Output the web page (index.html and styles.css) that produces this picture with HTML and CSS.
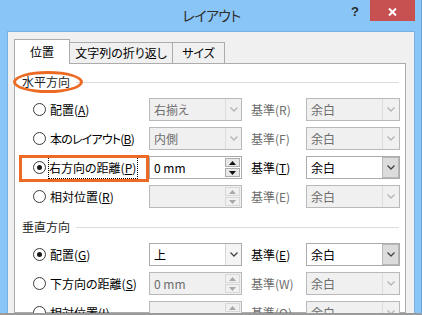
FILE: index.html
```html
<!DOCTYPE html>
<html lang="ja">
<head>
<meta charset="utf-8">
<link rel="stylesheet" href="styles.css">
</head>
<body>
<div class="window">
  <div class="titlebar">
    <div></div>
    <div class="title">レイアウト</div>
    <div class="controls">
      <span class="help">?</span>
      <span class="close"><svg width="9" height="8" viewBox="0 0 9 8"><path d="M1 0.5 L8 7.5 M8 0.5 L1 7.5" stroke="#fff" stroke-width="2" fill="none"/></svg></span>
    </div>
  </div>
  <div class="client">
    <div class="tabs">
      <div class="tab sel">位置</div>
      <div class="tab t2">文字列の折り返し</div>
      <div class="tab t3">サイズ</div>
    </div>
    <div class="panel">
      <div class="heading"><span class="htext">水平方向</span><span class="ellipse"></span></div>
      <div class="rows">
        <div class="row">
          <div class="opt"><span class="radio"></span><span>配置(<u>A</u>)</span></div>
          <div class="combo dis"><span class="val">右揃え</span><span class="btn"><svg width="8" height="5" viewBox="0 0 8 5"><path d="M0.5 0.5 L4 4 L7.5 0.5" fill="none" stroke="currentColor" stroke-width="1.3"/></svg></span></div>
          <div class="lbl dis">基準(R)</div>
          <div class="combo dis wide"><span class="val">余白</span><span class="btn"><svg width="8" height="5" viewBox="0 0 8 5"><path d="M0.5 0.5 L4 4 L7.5 0.5" fill="none" stroke="currentColor" stroke-width="1.3"/></svg></span></div>
        </div>
        <div class="row">
          <div class="opt"><span class="radio"></span><span class="narrow">本のレイアウト(<u>B</u>)</span></div>
          <div class="combo dis"><span class="val">内側</span><span class="btn"><svg width="8" height="5" viewBox="0 0 8 5"><path d="M0.5 0.5 L4 4 L7.5 0.5" fill="none" stroke="currentColor" stroke-width="1.3"/></svg></span></div>
          <div class="lbl dis">基準(F)</div>
          <div class="combo dis wide"><span class="val">余白</span><span class="btn"><svg width="8" height="5" viewBox="0 0 8 5"><path d="M0.5 0.5 L4 4 L7.5 0.5" fill="none" stroke="currentColor" stroke-width="1.3"/></svg></span></div>
        </div>
        <div class="row">
          <div class="opt focus-row"><span class="radio on"></span><span class="focus">右方向の距離(<u>P</u>)</span><span class="box"></span></div>
          <div class="spin"><span class="val">0 mm</span><span class="sbtns"><span class="sb"><svg width="7" height="4" viewBox="0 0 7 4"><path d="M0 4 L3.5 0 L7 4Z" fill="currentColor"/></svg></span><span class="sb"><svg width="7" height="4" viewBox="0 0 7 4"><path d="M0 0 L3.5 4 L7 0Z" fill="currentColor"/></svg></span></span></div>
          <div class="lbl">基準(<u>T</u>)</div>
          <div class="combo wide"><span class="val">余白</span><span class="btn"><svg width="8" height="5" viewBox="0 0 8 5"><path d="M0.5 0.5 L4 4 L7.5 0.5" fill="none" stroke="currentColor" stroke-width="1.3"/></svg></span></div>
        </div>
        <div class="row">
          <div class="opt"><span class="radio"></span><span>相対位置(<u>R</u>)</span></div>
          <div class="spin dis"><span class="val"></span><span class="sbtns"><span class="sb"><svg width="7" height="4" viewBox="0 0 7 4"><path d="M0 4 L3.5 0 L7 4Z" fill="currentColor"/></svg></span><span class="sb"><svg width="7" height="4" viewBox="0 0 7 4"><path d="M0 0 L3.5 4 L7 0Z" fill="currentColor"/></svg></span></span></div>
          <div class="lbl dis">基準(E)</div>
          <div class="combo dis wide"><span class="val">余白</span><span class="btn"><svg width="8" height="5" viewBox="0 0 8 5"><path d="M0.5 0.5 L4 4 L7.5 0.5" fill="none" stroke="currentColor" stroke-width="1.3"/></svg></span></div>
        </div>
      </div>
      <div class="heading second"><span class="htext">垂直方向</span></div>
      <div class="rows">
        <div class="row">
          <div class="opt"><span class="radio on"></span><span>配置(<u>G</u>)</span></div>
          <div class="combo"><span class="val">上</span><span class="btn"><svg width="8" height="5" viewBox="0 0 8 5"><path d="M0.5 0.5 L4 4 L7.5 0.5" fill="none" stroke="currentColor" stroke-width="1.3"/></svg></span></div>
          <div class="lbl">基準(<u>E</u>)</div>
          <div class="combo wide"><span class="val">余白</span><span class="btn"><svg width="8" height="5" viewBox="0 0 8 5"><path d="M0.5 0.5 L4 4 L7.5 0.5" fill="none" stroke="currentColor" stroke-width="1.3"/></svg></span></div>
        </div>
        <div class="row">
          <div class="opt"><span class="radio"></span><span>下方向の距離(<u>S</u>)</span></div>
          <div class="spin dis"><span class="val">0 mm</span><span class="sbtns"><span class="sb"><svg width="7" height="4" viewBox="0 0 7 4"><path d="M0 4 L3.5 0 L7 4Z" fill="currentColor"/></svg></span><span class="sb"><svg width="7" height="4" viewBox="0 0 7 4"><path d="M0 0 L3.5 4 L7 0Z" fill="currentColor"/></svg></span></span></div>
          <div class="lbl dis">基準(W)</div>
          <div class="combo dis wide"><span class="val">余白</span><span class="btn"><svg width="8" height="5" viewBox="0 0 8 5"><path d="M0.5 0.5 L4 4 L7.5 0.5" fill="none" stroke="currentColor" stroke-width="1.3"/></svg></span></div>
        </div>
        <div class="row">
          <div class="opt"><span class="radio"></span><span>相対位置(<u>I</u>)</span></div>
          <div class="spin dis"><span class="val"></span><span class="sbtns"><span class="sb"><svg width="7" height="4" viewBox="0 0 7 4"><path d="M0 4 L3.5 0 L7 4Z" fill="currentColor"/></svg></span><span class="sb"><svg width="7" height="4" viewBox="0 0 7 4"><path d="M0 0 L3.5 4 L7 0Z" fill="currentColor"/></svg></span></span></div>
          <div class="lbl dis">基準(O)</div>
          <div class="combo dis wide"><span class="val">余白</span><span class="btn"><svg width="8" height="5" viewBox="0 0 8 5"><path d="M0.5 0.5 L4 4 L7.5 0.5" fill="none" stroke="currentColor" stroke-width="1.3"/></svg></span></div>
        </div>
      </div>
    </div>
  </div>
</div>
</body>
</html>
```

FILE: styles.css
```css
* { box-sizing: border-box; }
html, body { margin: 0; padding: 0; }
body {
  width: 422px;
  height: 315px;
  overflow: hidden;
  font-family: "Noto Sans CJK JP", "Noto Sans", sans-serif;
  font-size: 12px;
  font-feature-settings: "palt";
  color: #000;
}
.window {
  width: 422px;
  height: 315px;
  background: #8AC5F8;
  border-bottom: 2px solid #9A9A9A;
  border-right: 1px solid #6FA6D8;
  overflow: hidden;
  display: flex;
  flex-direction: column;
}
.titlebar {
  height: 31px;
  flex: none;
  display: grid;
  grid-template-columns: 1fr auto 1fr;
}
.title {
  font-size: 14px;
  letter-spacing: -0.6px;
  line-height: 31px;
  color: #2E2E2E;
  padding-left: 2px;
}
.controls {
  display: flex;
  justify-content: flex-end;
  align-items: flex-start;
}
.help {
  font-family: "Liberation Sans", sans-serif;
  font-weight: bold;
  font-size: 13px;
  line-height: 13px;
  margin-top: 5px;
  margin-right: 11px;
  color: #2B2B2B;
}
.close {
  width: 45px;
  height: 21px;
  margin-right: 6px;
  background: #C75050;
  display: flex;
  align-items: center;
  justify-content: center;
  padding-top: 2px;
}
.client {
  flex: 1;
  min-height: 0;
  margin: 0 6px 0 7px;
  background: #F0F0F0;
  border: 1px solid #78B0E2;
  border-bottom: none;
  padding: 7px 8px 0 6px;
  display: flex;
  flex-direction: column;
}
.tabs {
  height: 24px;
  display: flex;
  align-items: flex-end;
  flex: none;
  position: relative;
  z-index: 1;
}
.tab {
  height: 21px;
  border: 1px solid #ACACAC;
  border-bottom: none;
  background: #F0F0F0;
  text-align: center;
  line-height: 20px;
  color: #000;
}
.tab.sel {
  width: 56px;
  height: 25px;
  margin-bottom: -1px;
  background: #fff;
  line-height: 23px;
  position: relative;
  z-index: 2;
}
.tab.t2 { width: 104px; margin-left: -1px; }
.tab.t3 { width: 53px; margin-left: -1px; }
.panel {
  flex: 1;
  min-height: 0;
  background: #fff;
  border: 1px solid #ACACAC;
  padding: 10px 0 0 7px;
}
.heading {
  position: relative;
  display: flex;
  align-items: center;
  height: 16px;
  line-height: 16px;
  margin-right: 6px;
  margin-bottom: 8px;
  color: #1E1E1E;
}
.heading::after {
  content: "";
  flex: 1;
  height: 1px;
  background: #DCDCDC;
  margin-left: 6px;
}
.heading.second { margin-top: 11px; }
.ellipse {
  position: absolute;
  left: -9px;
  top: -3px;
  width: 70px;
  height: 22px;
  border: 3px solid #EC6A22;
  border-radius: 50%;
}
.rows {
  display: flex;
  flex-direction: column;
  gap: 6px;
  padding-left: 11px;
}
.row {
  display: grid;
  grid-template-columns: 116px 93px 64px 94px;
  height: 23px;
  align-items: center;
}
.opt {
  display: flex;
  align-items: center;
  gap: 4px;
  height: 23px;
  position: relative;
  white-space: nowrap;
}
.narrow { letter-spacing: -0.8px; }
.radio {
  width: 13px;
  height: 13px;
  border-radius: 50%;
  border: 1px solid #3A3A3A;
  background: #fff;
  display: flex;
  align-items: center;
  justify-content: center;
  flex: none;
}
.radio.on::after {
  content: "";
  width: 5px;
  height: 5px;
  border-radius: 50%;
  background: #1A1A1A;
}
.focus {
  outline: 1px dotted #000;
  outline-offset: 0;
  padding: 1px 1px 1px 0;
  line-height: 18px;
  margin-left: -1px;
}
.box {
  position: absolute;
  left: -14px;
  top: -1px;
  width: 130px;
  height: 27px;
  border: 3px solid #EC6A22;
}
.lbl {
  padding-left: 9px;
  white-space: nowrap;
}
.lbl.dis { color: #6D6D6D; }
.combo, .spin {
  height: 23px;
  display: flex;
  border: 1px solid #ABABAB;
  background: #fff;
}
.combo .val, .spin .val {
  flex: 1;
  padding-left: 4px;
  line-height: 21px;
  white-space: nowrap;
}
.combo .btn {
  width: 16px;
  border-left: 1px solid #D6D6D6;
  background: #F4F4F4;
  display: flex;
  align-items: center;
  justify-content: center;
  color: #444;
}
.combo.wide .btn {
  width: 17px;
  background: #DCDCDC;
  border: 1px solid #B8B8B8;
  margin: 0;
}
.combo.dis {
  background: #F0F0F0;
  border-color: #B9B9B9;
  color: #6D6D6D;
}
.combo.dis .btn {
  background: #F0F0F0;
  border: none;
  border-left: 1px solid #DCDCDC;
  color: #B4B4B4;
}
.sbtns {
  width: 16px;
  display: flex;
  flex-direction: column;
  gap: 1px;
  padding: 1px 1px 1px 0;
}
.sb {
  flex: 1;
  border: 1px solid #ACACAC;
  background: #E8E8E8;
  display: flex;
  align-items: center;
  justify-content: center;
  color: #111;
}
.spin.dis {
  background: #F0F0F0;
  border-color: #B9B9B9;
  color: #6D6D6D;
}
.spin.dis .sb {
  background: #F0F0F0;
  border-color: #D8D8D8;
  color: #A8A8A8;
}
```
